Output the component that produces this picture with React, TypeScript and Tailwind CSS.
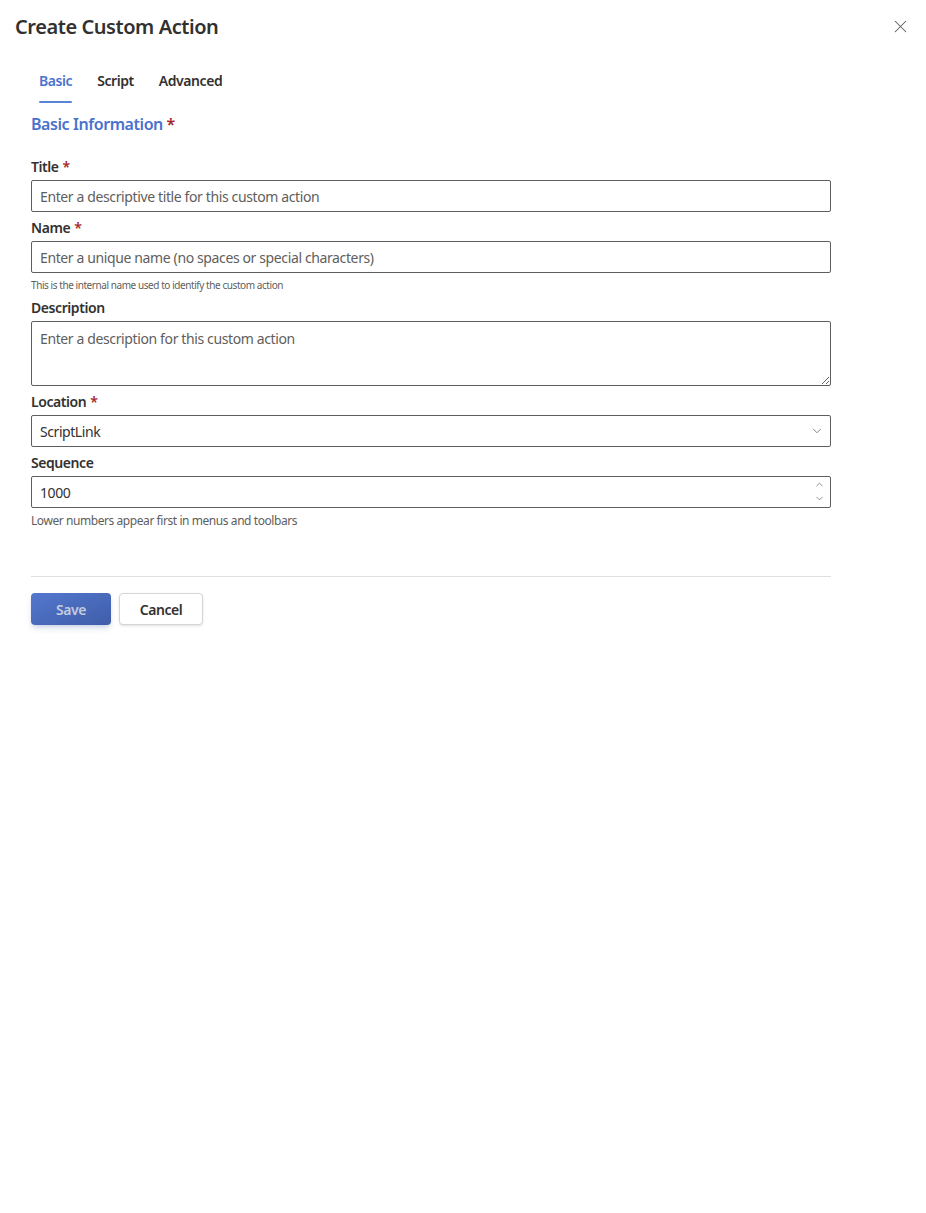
import { X, ChevronDown, ChevronUp } from 'lucide-react';

const font = { fontFamily: '"Segoe UI", "Noto Sans", "Open Sans", sans-serif' };

function Label({ text, required }: { text: string; required?: boolean }) {
  return (
    <label className="block text-[14px] font-semibold leading-5 text-[#323130] pb-[3px]">
      {text}
      {required && <span className="text-[#a4262c] pl-1">*</span>}
    </label>
  );
}

const inputCls =
  'w-full h-8 border border-[#605e5c] rounded-[2px] px-2 text-[14px] tracking-[-0.027em] text-[#323130] placeholder:text-[#605e5c] outline-none bg-white block';

export default function App() {
  return (
    <div className="min-h-[1213px] w-[926px] bg-white text-[#323130] tracking-[-0.027em]" style={font}>
      {/* header */}
      <div className="flex items-center justify-between pl-[15px] pr-[10px] pt-[11px]">
        <h1 className="text-[20px] font-semibold leading-7 text-[#323130]">Create Custom Action</h1>
        <button className="w-8 h-8 flex items-center justify-center text-[#605e5c]">
          <X size={21} strokeWidth={1.2} className="-translate-y-px" />
        </button>
      </div>

      <div className="pl-[31px] w-[831px]">
        {/* tabs */}
        <div className="flex gap-[25px] mt-[28px] pl-[8px]">
          <div className="flex flex-col items-center">
            <span className="text-[14px] font-semibold leading-5 text-[#4a72cc]">Basic</span>
            <span className="mt-[10px] h-[2px] w-[33px] bg-[#5b84d6] rounded" />
          </div>
          <span className="text-[14px] font-semibold leading-5 text-[#323130]">Script</span>
          <span className="text-[14px] font-semibold leading-5 text-[#323130]">Advanced</span>
        </div>

        <h2 className="mt-[9px] text-[16px] font-semibold leading-6 text-[#4a72cc]">
          Basic Information <span className="text-[#a4262c]">*</span>
        </h2>

        <div className="mt-[21px]">
          <Label text="Title" required />
          <input className={inputCls} placeholder="Enter a descriptive title for this custom action" />
        </div>

        <div className="mt-[6px]">
          <Label text="Name" required />
          <input className={inputCls} placeholder="Enter a unique name (no spaces or special characters)" />
          <p className="text-[10px] leading-4 text-[#605e5c] mt-[4px]">This is the internal name used to identify the custom action</p>
        </div>

        <div className="mt-[5px]">
          <Label text="Description" />
          <textarea
            className="w-full h-[65px] border border-[#605e5c] rounded-[2px] px-2 py-[6px] text-[14px] tracking-[-0.027em] text-[#323130] placeholder:text-[#605e5c] outline-none block"
            placeholder="Enter a description for this custom action"
          />
        </div>

        <div className="mt-[6px]">
          <Label text="Location" required />
          <div className="relative">
            <div className="w-full h-8 border border-[#605e5c] rounded-[2px] px-2 flex items-center text-[14px]">ScriptLink</div>
            <ChevronDown size={14} strokeWidth={1.3} className="absolute right-[7px] top-[9px] text-[#605e5c]" />
          </div>
        </div>

        <div className="mt-[6px]">
          <Label text="Sequence" />
          <div className="relative">
            <div className="w-full h-8 border border-[#605e5c] rounded-[2px] px-2 flex items-center text-[14px]">1000</div>
            <div className="absolute right-[6px] top-[3px] flex flex-col text-[#605e5c]">
              <ChevronUp size={11} strokeWidth={1.5} className="mb-[3px]" />
              <ChevronDown size={11} strokeWidth={1.5} />
            </div>
          </div>
          <p className="text-[12px] leading-4 text-[#605e5c] mt-[5px]">Lower numbers appear first in menus and toolbars</p>
        </div>

        <div className="mt-[47px] border-t border-[#e1dfdd]" />

        <div className="flex gap-2 mt-[16px]">
          <button className="w-[80px] h-8 rounded-[4px] bg-gradient-to-br from-[#5478cf] to-[#3f5da8] text-[14px] font-semibold text-[#c4cbe0] shadow-md shadow-[#3f5da8]/20">
            Save
          </button>
          <button className="w-[84px] h-8 rounded-[4px] border border-[#d6d6d6] bg-white text-[14px] font-semibold text-[#323130] shadow-sm">
            Cancel
          </button>
        </div>
      </div>
    </div>
  );
}
